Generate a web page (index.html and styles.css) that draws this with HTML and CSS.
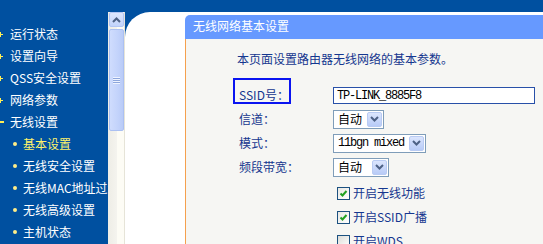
FILE: index.html
```html
<!DOCTYPE html>
<html lang="zh-CN">
<head>
<meta charset="utf-8">
<title>无线网络基本设置</title>
<link rel="stylesheet" href="styles.css">
</head>
<body>
<div class="page">
  <nav class="sidebar">
    <ul class="menu">
      <li class="item top"><svg class="mk-plus" viewBox="0 0 5 5" width="5" height="5"><path d="M2 0h1v2h2v1H3v2H2V3H0V2h2z" fill="#ffee55"/></svg>运行状态</li>
      <li class="item top"><svg class="mk-plus" viewBox="0 0 5 5" width="5" height="5"><path d="M2 0h1v2h2v1H3v2H2V3H0V2h2z" fill="#ffee55"/></svg>设置向导</li>
      <li class="item top"><svg class="mk-plus" viewBox="0 0 5 5" width="5" height="5"><path d="M2 0h1v2h2v1H3v2H2V3H0V2h2z" fill="#ffee55"/></svg>QSS安全设置</li>
      <li class="item top"><svg class="mk-plus" viewBox="0 0 5 5" width="5" height="5"><path d="M2 0h1v2h2v1H3v2H2V3H0V2h2z" fill="#ffee55"/></svg>网络参数</li>
      <li class="item top"><span class="mk-minus"></span>无线设置</li>
      <li class="item sub active"><span class="mk-dot"></span>基本设置</li>
      <li class="item sub"><span class="mk-dot"></span>无线安全设置</li>
      <li class="item sub"><span class="mk-dot"></span>无线MAC地址过滤</li>
      <li class="item sub"><span class="mk-dot"></span>无线高级设置</li>
      <li class="item sub"><span class="mk-dot"></span>主机状态</li>
    </ul>
  </nav>
  <div class="scrollbar">
    <div class="sb-btn"><svg viewBox="0 0 9 6" width="9" height="6"><path d="M1 5L4.5 1.5L8 5" fill="none" stroke="#4d6185" stroke-width="2"/></svg></div>
    <div class="sb-thumb"><span class="grip"></span></div>
  </div>
  <main class="main">
    <section class="panel">
      <div class="panel-head">无线网络基本设置</div>
      <div class="panel-body">
        <p class="desc">本页面设置路由器无线网络的基本参数。</p>
        <div class="row row-ssid">
          <div class="label"><span class="hl hl-box">SSID号：</span></div>
          <div class="field"><input class="text-input" type="text" value="TP-LINK_8885F8"></div>
        </div>
        <div class="row row-first">
          <div class="label"><span class="hl">信道：</span></div>
          <div class="field"><div class="select w-51"><span class="sel-text">自动</span><span class="sel-btn"><svg viewBox="0 0 9 6" width="9" height="6"><path d="M1 1L4.5 4.5L8 1" fill="none" stroke="#4d6185" stroke-width="2"/></svg></span></div></div>
        </div>
        <div class="row">
          <div class="label"><span class="hl">模式：</span></div>
          <div class="field"><div class="select w-93"><span class="sel-text mono">11bgn mixed</span><span class="sel-btn"><svg viewBox="0 0 9 6" width="9" height="6"><path d="M1 1L4.5 4.5L8 1" fill="none" stroke="#4d6185" stroke-width="2"/></svg></span></div></div>
        </div>
        <div class="row">
          <div class="label"><span class="hl">频段带宽：</span></div>
          <div class="field"><div class="select w-56"><span class="sel-text">自动</span><span class="sel-btn"><svg viewBox="0 0 9 6" width="9" height="6"><path d="M1 1L4.5 4.5L8 1" fill="none" stroke="#4d6185" stroke-width="2"/></svg></span></div></div>
        </div>
        <div class="row row-check-first">
          <div class="label"></div>
          <div class="field check-field"><span class="checkbox checked"><svg viewBox="0 0 11 11" width="11" height="11"><path d="M2.5 5.5L4.5 7.5L8.5 3" fill="none" stroke="#21a121" stroke-width="2"/></svg></span><span class="check-label">开启无线功能</span></div>
        </div>
        <div class="row">
          <div class="label"></div>
          <div class="field check-field"><span class="checkbox checked"><svg viewBox="0 0 11 11" width="11" height="11"><path d="M2.5 5.5L4.5 7.5L8.5 3" fill="none" stroke="#21a121" stroke-width="2"/></svg></span><span class="check-label">开启SSID广播</span></div>
        </div>
        <div class="row">
          <div class="label"></div>
          <div class="field check-field"><span class="checkbox"></span><span class="check-label">开启WDS</span></div>
        </div>
      </div>
    </section>
  </main>
</div>
</body>
</html>
```
FILE: styles.css
```css
* { box-sizing: border-box; }
html, body {
  margin: 0;
  padding: 0;
  width: 543px;
  height: 244px;
  overflow: hidden;
  background: #0050a0;
  font-family: "Noto Sans CJK SC", "Noto Sans", sans-serif;
  font-size: 12px;
}
.page {
  display: flex;
  height: 244px;
}

/* sidebar */
.sidebar {
  width: 108px;
  flex: none;
  overflow: hidden;
  padding-top: 23px;
}
.menu {
  list-style: none;
  margin: 0;
  padding: 0;
}
.item {
  height: 22px;
  line-height: 22px;
  white-space: nowrap;
  color: #ffffff;
  display: flex;
  align-items: center;
}
.item.active { color: #fff36b; }
.mk-plus {
  flex: none;
  margin-left: -2px;
  margin-right: 7px;
}
.mk-minus {
  flex: none;
  width: 4px;
  height: 2px;
  background: #ffee55;
  margin-right: 6px;
}
.mk-dot {
  flex: none;
  width: 4px;
  height: 4px;
  border-radius: 2px;
  background: #ffee88;
  margin-left: 13px;
  margin-right: 6px;
}

/* scrollbar */
.scrollbar {
  width: 17px;
  flex: none;
  margin-top: 12px;
  padding: 0 1px;
  background: linear-gradient(to right, #eeede6 0, #f4f3ee 50%, #fdfcf5 56%, #fdfcf5 93%, #e6e4d8 94%, #e6e4d8 100%);
  display: flex;
  flex-direction: column;
}
.sb-btn {
  height: 15px;
  border: 1px solid #b3c6f4;
  border-radius: 2px;
  background: linear-gradient(to bottom, #dde7fe, #c2d3fb);
  display: flex;
  align-items: center;
  justify-content: center;
}
.sb-thumb {
  margin-top: 2px;
  height: 102px;
  border: 1px solid #abc0f2;
  border-radius: 2px;
  background: linear-gradient(to right, #cfdcfd, #c3d3fb 60%, #b9cbf7);
  display: flex;
  align-items: center;
  justify-content: center;
}
.grip {
  width: 7px;
  height: 7px;
  background: repeating-linear-gradient(to bottom, #eef3ff 0, #eef3ff 1px, #8da6dc 1px, #8da6dc 2px);
}

/* main */
.main {
  flex: 1;
  margin-top: 12px;
  background: #ffffff;
  border-top-left-radius: 25px;
  padding: 3px 0 0 60px;
  display: flex;
  flex-direction: column;
  min-width: 0;
}
.panel {
  flex: 1;
  display: flex;
  flex-direction: column;
}
.panel-head {
  height: 24px;
  line-height: 22px;
  background: #6699ff;
  color: #ffffff;
  padding-left: 8px;
  border-top-left-radius: 5px;
}
.panel-body {
  flex: 1;
  background: #f6f6f3;
  border-left: 1px solid #f5a04e;
  padding: 8px 0 0 47px;
  color: #15378f;
}
.desc {
  margin: 0;
  height: 24px;
  line-height: 24px;
  padding-left: 4px;
  white-space: nowrap;
}
.row {
  display: flex;
  align-items: center;
  height: 24px;
  white-space: nowrap;
}
.row-ssid {
  margin-top: 7px;
  height: 26px;
  align-items: flex-end;
}
.row-first { margin-top: 3px; }
.row-check-first { margin-top: 2px; }
.label {
  width: 100px;
  flex: none;
}
.hl {
  display: inline-block;
  border: 2px solid transparent;
  padding-left: 4px;
  line-height: 14px;
}
.hl-box {
  width: 58px;
  height: 26px;
  padding-top: 8px;
  border-color: #0a14f0;
  display: block;
}
.field {
  display: flex;
  align-items: center;
}

.text-input {
  width: 202px;
  height: 17px;
  border: 1px solid #2850a8;
  padding: 0 3px;
  margin: 0;
  background: #ffffff;
  color: #000000;
  font-family: "Liberation Mono", monospace;
  font-size: 12px;
  letter-spacing: -1.2px;
  outline: none;
}
.select {
  height: 19px;
  border: 1px solid #7f9db9;
  background: #ffffff;
  display: flex;
  align-items: center;
  justify-content: space-between;
  padding-left: 4px;
  color: #000000;
}
.w-51 { width: 51px; }
.w-93 { width: 93px; }
.w-56 { width: 56px; }
.sel-text { line-height: 14px; }
.mono {
  font-family: "Liberation Mono", monospace;
  letter-spacing: -1.2px;
}
.sel-btn {
  width: 15px;
  height: 15px;
  margin-right: 1px;
  border: 1px solid #b9cbf3;
  border-radius: 2px;
  background: linear-gradient(to bottom, #dbe5fd, #b8cbf7);
  display: flex;
  align-items: center;
  justify-content: center;
}

.check-field { padding-left: 4px; }
.checkbox {
  width: 13px;
  height: 13px;
  border: 1px solid #1c5180;
  background: linear-gradient(135deg, #dcdcd7, #ffffff);
  display: flex;
  align-items: center;
  justify-content: center;
  margin-right: 3px;
}
.checkbox.checked { background: linear-gradient(135deg, #e8e8e3, #ffffff); }
.check-label { line-height: 14px; }
```
